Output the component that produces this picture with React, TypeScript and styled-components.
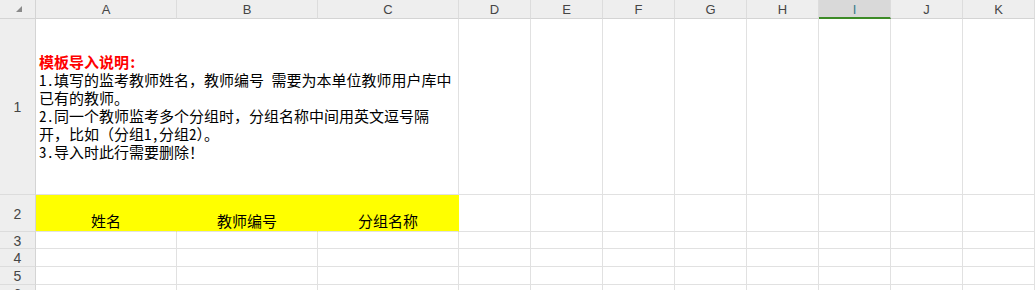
import React from "react";
import styled, { createGlobalStyle, css } from "styled-components";

const Global = createGlobalStyle`
  html, body { margin: 0; padding: 0; background: #ffffff; overflow: hidden; }
  body { width: 1035px; height: 290px; }
`;

const COLS = ["A", "B", "C", "D", "E", "F", "G", "H", "I", "J", "K"];
const SELECTED = "I";

const Sheet = styled.div`
  display: grid;
  grid-template-columns: 36px repeat(3, 141px) repeat(8, 72px);
  grid-template-rows: 19px 176px 37px 17px 18px 18px 18px;
  width: 1035px;
  height: 290px;
  overflow: hidden;
  background: #ffffff;
`;

const HeadBase = css`
  box-sizing: border-box;
  background: #eeeeee;
  color: #454545;
  font-family: "Liberation Sans", Arial, sans-serif;
  font-size: 13px;
  display: flex;
  align-items: center;
  justify-content: center;
`;

const Corner = styled.div`
  ${HeadBase};
  border-right: 1px solid #d4d4d4;
  border-bottom: 1px solid #d4d4d4;
  justify-content: flex-start;
  align-items: flex-start;
  padding: 6px 0 0 16px;
`;

const CornerMark = styled.div`
  width: 0;
  height: 0;
  border-left: 6px solid transparent;
  border-bottom: 6px solid #8a8a8a;
`;

const ColHeader = styled.div<{ $selected?: boolean }>`
  ${HeadBase};
  border-right: 1px solid #dcdcdc;
  border-bottom: 1px solid #d4d4d4;
  padding-top: 1px;
  ${(p) =>
    p.$selected &&
    css`
      background: #d9d9d9;
      border-bottom: 2px solid #3d8b27;
      padding-top: 2px;
      color: #3a7a8a;
    `}
`;

const RowHeader = styled.div`
  ${HeadBase};
  font-size: 14px;
  line-height: 16px;
  border-right: 1px solid #d4d4d4;
  border-bottom: 1px solid #dcdcdc;
  padding-top: 1px;
`;

const Cell = styled.div`
  box-sizing: border-box;
  border-right: 1px solid #e1e1e1;
  border-bottom: 1px solid #e1e1e1;
  background: #ffffff;
`;

const cellFont = `"Noto Sans Mono CJK SC", "Noto Sans CJK SC", sans-serif`;

const NoteCell = styled(Cell)`
  grid-column: span 3;
  display: flex;
  flex-direction: column;
  justify-content: center;
  padding: 0 0 0 3px;
  font-family: ${cellFont};
  font-size: 15px;
  line-height: 18px;
  color: #000000;
  white-space: nowrap;
`;

const NoteTitle = styled.div`
  color: #ff0000;
  font-weight: bold;
  height: 18px;
`;

const NoteLine = styled.div`
  height: 18px;
`;

const TitleCell = styled(Cell)`
  background: #ffff00;
  border-right-color: #ffff00;
  display: flex;
  align-items: flex-end;
  justify-content: center;
  padding-bottom: 1px;
  font-family: ${cellFont};
  font-size: 15px;
  line-height: 18px;
  color: #000000;
`;

const noteLines = [
  "1.填写的监考教师姓名，教师编号 需要为本单位教师用户库中",
  "已有的教师。",
  "2.同一个教师监考多个分组时，分组名称中间用英文逗号隔",
  "开，比如（分组1,分组2）。",
  "3.导入时此行需要删除！",
];

const titles = ["姓名", "教师编号", "分组名称"];

const EmptyCells = ({ count, row }: { count: number; row: number }) => (
  <>
    {Array.from({ length: count }).map((_, i) => (
      <Cell key={`r${row}-${i}`} />
    ))}
  </>
);

export default function App() {
  return (
    <>
      <Global />
      <Sheet>
        <Corner>
          <CornerMark />
        </Corner>
        {COLS.map((c) => (
          <ColHeader key={c} $selected={c === SELECTED}>
            {c}
          </ColHeader>
        ))}

        <RowHeader>1</RowHeader>
        <NoteCell>
          <NoteTitle>模板导入说明:</NoteTitle>
          {noteLines.map((l) => (
            <NoteLine key={l}>{l}</NoteLine>
          ))}
        </NoteCell>
        <EmptyCells count={8} row={1} />

        <RowHeader>2</RowHeader>
        {titles.map((t) => (
          <TitleCell key={t}>{t}</TitleCell>
        ))}
        <EmptyCells count={8} row={2} />

        {[3, 4, 5, 6].map((r) => (
          <React.Fragment key={r}>
            <RowHeader>{r}</RowHeader>
            <EmptyCells count={11} row={r} />
          </React.Fragment>
        ))}
      </Sheet>
    </>
  );
}
